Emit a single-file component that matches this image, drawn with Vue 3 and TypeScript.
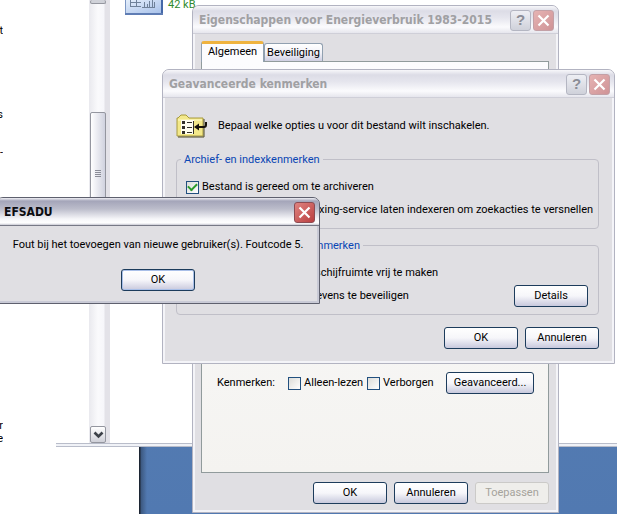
<script setup lang="ts">
import { ref } from 'vue'

interface Fragment {
  text: string
  top: number
}

const fragments: Fragment[] = [
  { text: 't', top: 24 },
  { text: 's', top: 108 },
  { text: '-', top: 146 },
  { text: 'r', top: 419 },
  { text: 'e', top: 432 },
]

const archive = ref(true)
const indexed = ref(false)
const compress = ref(false)
const encrypt = ref(true)
const readOnly = ref(false)
const hidden = ref(false)
</script>

<template>
  <main class="desktop">
    <section class="explorer">
      <div class="pane">
        <span
          v-for="f in fragments"
          :key="f.top"
          class="fragment"
          :style="{ top: f.top + 'px' }"
        >{{ f.text }}</span>
      </div>
      <div class="scrollbar">
        <div class="thumb thumb-end"></div>
        <div class="track"></div>
        <div class="thumb thumb-main">
          <i></i><i></i><i></i><i></i>
        </div>
        <button class="arrow" aria-label="Scroll">
          <svg width="11" height="8" viewBox="0 0 11 8"><path d="M1.500 1.500l4 4 4-4" fill="none" stroke="#3c4148" stroke-width="2.600" /></svg>
        </button>
      </div>
      <div class="files">
        <svg class="file-icon" width="38" height="15" viewBox="0 0 38 15">
          <defs>
            <linearGradient id="tile" x1="0" y1="0" x2="1" y2="1">
              <stop offset="0" stop-color="#e4eefb" />
              <stop offset="1" stop-color="#a9c2ea" />
            </linearGradient>
          </defs>
          <rect width="38" height="15" fill="#7d97c4" />
          <rect x="1" width="35" height="13" fill="url(#tile)" />
          <rect x="36" width="2" height="15" fill="#4568a8" />
          <rect y="13" width="38" height="2" fill="#5f7db4" />
          <path d="M5.500 0V7M5 2.500H16M5 6.500H16M11.500 0V7M17 7.500H30M19.500 7V2M22.500 7V4M24.500 7V1M27.500 7V0M29.500 7V2" fill="none" stroke="#6f8199" />
        </svg>
        <span class="size">42 kB</span>
      </div>
    </section>
    <section class="lower"></section>

    <section class="window inactive properties">
      <header class="titlebar">
        <h1>Eigenschappen voor Energieverbruik 1983-2015</h1>
        <button class="caption help" aria-label="Help">?</button>
        <button class="caption close" aria-label="Sluiten">
          <svg width="13" height="13" viewBox="0 0 13 13"><path d="M1.500 1.500l10 10M11.500 1.500l-10 10" fill="none" stroke="#fff" stroke-width="2.200" /></svg>
        </button>
      </header>
      <div class="body">
        <nav class="tabs">
          <button class="tab selected">Algemeen</button>
          <button class="tab">Beveiliging</button>
        </nav>
        <div class="sheet">
          <div class="attributes">
            <span class="caption-text">Kenmerken:</span>
            <label class="check"><input v-model="readOnly" type="checkbox">Alleen-lezen</label>
            <label class="check"><input v-model="hidden" type="checkbox">Verborgen</label>
            <button class="btn wide">Geavanceerd...</button>
          </div>
        </div>
        <footer class="actions">
          <button class="btn">OK</button>
          <button class="btn">Annuleren</button>
          <button class="btn" disabled>Toepassen</button>
        </footer>
      </div>
    </section>

    <section class="window inactive advanced">
      <header class="titlebar">
        <h1>Geavanceerde kenmerken</h1>
        <button class="caption help" aria-label="Help">?</button>
        <button class="caption close" aria-label="Sluiten">
          <svg width="13" height="13" viewBox="0 0 13 13"><path d="M1.500 1.500l10 10M11.500 1.500l-10 10" fill="none" stroke="#fff" stroke-width="2.200" /></svg>
        </button>
      </header>
      <div class="body">
        <div class="intro">
          <svg width="32" height="24" viewBox="0 0 32 24">
            <path d="M2 4L5 1H10L13 4H27V22H1V4Z" fill="#f3e88a" stroke="#a89a3c" />
            <path d="M2 6H26" stroke="#fffbc8" />
            <path d="M28 5V23H2" fill="none" stroke="#4f4a24" />
            <rect x="5" y="6" width="13" height="14" fill="#fffef0" />
            <path d="M6 7h3v3h-3zM6 12h3v3h-3zM6 17h3v3h-3z" fill="#33302a" />
            <path d="M11 8.500H16M11 13.500H16M11 18.500H16M17.500 7V20" stroke="#33302a" />
            <path d="M30 8V11Q30 13 28 13H22" fill="none" stroke="#16120c" stroke-width="2" />
            <path d="M18 13L23 9.500V16.500Z" fill="#16120c" />
          </svg>
          <p>Bepaal welke opties u voor dit bestand wilt inschakelen.</p>
        </div>
        <fieldset class="group">
          <legend>Archief- en indexkenmerken</legend>
          <label class="check"><input v-model="archive" type="checkbox">Bestand is gereed om te archiveren</label>
          <label class="check"><input v-model="indexed" type="checkbox"><span class="indent-a">Indexing-service laten indexeren om zoekacties te versnellen</span></label>
        </fieldset>
        <fieldset class="group second">
          <legend><span class="indent-b">kenmerken</span></legend>
          <label class="check"><input v-model="compress" type="checkbox"><span class="indent-c">schijfruimte vrij te maken</span></label>
          <div class="line">
            <label class="check"><input v-model="encrypt" type="checkbox"><span class="indent-d">gegevens te beveiligen</span></label>
            <button class="btn">Details</button>
          </div>
        </fieldset>
        <footer class="actions">
          <button class="btn">OK</button>
          <button class="btn">Annuleren</button>
        </footer>
      </div>
    </section>

    <section class="window message">
      <header class="titlebar">
        <h1>EFSADU</h1>
        <button class="caption close" aria-label="Sluiten">
          <svg width="13" height="13" viewBox="0 0 13 13"><path d="M1.500 1.500l10 10M11.500 1.500l-10 10" fill="none" stroke="#fff" stroke-width="2.200" /></svg>
        </button>
      </header>
      <div class="body">
        <p>Fout bij het toevoegen van nieuwe gebruiker(s). Foutcode 5.</p>
        <button class="btn default">OK</button>
      </div>
    </section>
  </main>
</template>

<style>
body {
  margin: 0;
  overflow: hidden;
}
</style>

<style scoped>
* {
  box-sizing: border-box;
}

.desktop {
  position: relative;
  display: flex;
  flex-direction: column;
  width: 100%;
  height: 100vh;
  overflow: hidden;
  background: linear-gradient(#5b80b2, #5179b1);
  color: #000;
  font: 11px/14px Tahoma, Roboto, sans-serif;
}

button,
input {
  margin: 0;
  font: inherit;
  color: inherit;
}

h1,
p {
  margin: 0;
}

/* Explorer behind the dialogs */
.explorer {
  display: flex;
  flex: none;
  height: 443px;
  background: #fff;
}

.pane {
  position: relative;
  flex: none;
  width: 89px;
}

.fragment {
  position: absolute;
  left: 0;
  width: 3px;
  overflow: hidden;
  display: flex;
  justify-content: flex-end;
}

.scrollbar {
  display: flex;
  flex-direction: column;
  flex: none;
  width: 21px;
  padding: 0 4px 0 1px;
  background: linear-gradient(90deg, #e9e9ee 0, #fafafc 9px, #f6f6fa 15px, #e3e2e8 16px, #e3e2e8 21px);
}

.thumb {
  border: 1px solid #94969f;
  border-radius: 2px;
  background: linear-gradient(90deg, #fff, #d0d2df);
}

.thumb-end {
  height: 4px;
  border-top: 0;
  background: #d0d2d9;
}

.track {
  height: 108px;
}

.thumb-main {
  display: flex;
  flex: 1;
  flex-direction: column;
  gap: 1px;
  margin-bottom: 180px;
  padding: 57px 4px 0;
}

.thumb-main i {
  height: 1px;
  background: #8b8d97;
}

.arrow {
  display: flex;
  align-items: center;
  justify-content: center;
  height: 17px;
  padding: 0;
  border: 1px solid #94969f;
  border-radius: 2px;
  background: linear-gradient(#fff, #cfd0d8);
}

.files {
  display: flex;
  gap: 5px;
  padding-left: 15px;
}

.size {
  margin-top: -2px;
  color: #2f8a2f;
}

.lower {
  flex: 1;
  background: linear-gradient(#b9bdca, #b9bdca) 56px 0 / 100% 1px no-repeat,
    linear-gradient(#f0f2f7, #f0f2f7) 56px 1px / 100% 2px no-repeat,
    linear-gradient(#b9bdca, #b9bdca) 56px 3px / 100% 1px no-repeat,
    linear-gradient(90deg, #fff 139px, #1c2533 139px, #1c2533 140px, #3c5880 141px, transparent 147px);
}

/* Windows */
.window {
  position: absolute;
  display: flex;
  flex-direction: column;
  border: 1px solid #b2b3c1;
  border-radius: 7px 7px 0 0;
  background: #e0dfe3;
  box-shadow: inset 2px 0 #f4f4f8, inset -2px 0 #f4f4f8, inset 0 -2px #f4f4f8;
}

.properties {
  left: 192px;
  top: 5px;
  width: 367px;
  height: 508px;
}

.advanced {
  left: 162px;
  top: 69px;
  width: 453px;
  height: 295px;
}

.message {
  left: -4px;
  top: 197px;
  width: 324px;
  height: 107px;
  border-color: #5e606e;
  box-shadow: inset -2px 0 #c9cad6, inset 0 -2px #c9cad6;
}

.titlebar {
  display: flex;
  flex: none;
  align-items: center;
  gap: 2px;
  height: 28px;
  padding: 1px 4px 0 6px;
  border-bottom: 1px solid #cfcfd8;
  border-radius: 6px 6px 0 0;
  background: linear-gradient(#f7f7fa 0, #dcdce6 5px, #e6e6ee 12px, #fbfbfd 21px, #e6e6ed 100%);
}

.message .titlebar {
  padding-left: 7px;
  border-bottom-color: #777986;
  background: linear-gradient(#f0f0f5 0, #a4a5b9 3px, #bcbdcb 11px, #f6f6f9 21px, #fff 25px, #c8c8d2 100%);
}

.titlebar h1 {
  flex: 1;
  color: #a0a0a3;
  font: bold 12px/16px "Trebuchet MS", "DejaVu Sans Condensed", sans-serif;
  white-space: nowrap;
}

.message h1 {
  color: #0c0c10;
}

.caption {
  display: flex;
  align-items: center;
  justify-content: center;
  width: 21px;
  height: 21px;
  padding: 0;
  border: 1px solid #b4b6c2;
  border-radius: 3px;
  background: linear-gradient(#eeeff4, #cfd1da);
}

.help {
  color: #8b8d96;
  font: bold 15px/18px "Liberation Sans", sans-serif;
}

.close {
  border-color: #c3a0a6;
  background: linear-gradient(135deg, #e6b3b3, #cf9396);
}

.message .close {
  border-color: #8d4b52;
  background: linear-gradient(135deg, #e08480, #b93e40);
}

.body {
  display: flex;
  flex: 1;
  flex-direction: column;
}

/* Buttons and checks */
.btn {
  width: 74px;
  height: 22px;
  padding: 0;
  border: 1px solid #1d3c5c;
  border-radius: 3px;
  background: linear-gradient(#fff, #f6f6fa 50%, #c8c9dd);
  text-align: center;
  white-space: nowrap;
}

.btn.wide {
  width: 89px;
}

.btn.default {
  box-shadow: inset 0 0 0 1px #a9bfe8;
}

.btn:disabled {
  border-color: #cbcac8;
  background: #efeeeb;
  color: #a5a39b;
}

.actions {
  display: flex;
  justify-content: flex-end;
  gap: 7px;
}

.check {
  display: flex;
  align-items: center;
  gap: 3px;
  white-space: nowrap;
}

.check input {
  appearance: none;
  display: grid;
  place-items: center;
  flex: none;
  width: 13px;
  height: 13px;
  border: 1px solid #22507f;
  background: linear-gradient(135deg, #dcdcd8, #fff);
}

.check input:checked::after {
  content: "";
  width: 7px;
  height: 4px;
  margin-top: -3px;
  border: solid #2c9b2c;
  border-width: 0 0 2px 2px;
  rotate: -45deg;
}

/* Properties */
.properties .body {
  padding: 7px 9px 8px 8px;
}

.tabs {
  display: flex;
  align-items: flex-end;
  height: 20px;
}

.tab {
  height: 18px;
  width: 59px;
  padding: 0;
  border: 1px solid #91a0b0;
  border-bottom: 0;
  border-radius: 3px 3px 0 0;
  background: linear-gradient(#fff, #f3f3f8 50%, #cfcfe2);
  white-space: nowrap;
}

.tab.selected {
  z-index: 1;
  width: 63px;
  height: 21px;
  margin-bottom: -1px;
  padding-bottom: 2px;
  border-top: 3px solid #efb33f;
  background: #fcfcfe;
}

.sheet {
  display: flex;
  flex: 1;
  flex-direction: column;
  justify-content: flex-end;
  padding: 0 14px 78px 15px;
  border: 1px solid #919b9c;
  background: linear-gradient(#fcfcfe, #f4f3f0);
}

.attributes {
  display: flex;
  align-items: center;
}

.caption-text {
  width: 72px;
}

.attributes .check {
  width: 80px;
}

.attributes .wide {
  margin-left: auto;
}

.properties .actions {
  padding-top: 9px;
}

/* Advanced attributes */
.advanced .body {
  padding: 15px 15px 0 13px;
}

.intro {
  display: flex;
  align-items: center;
  gap: 10px;
  height: 26px;
}

.group {
  display: flex;
  flex-direction: column;
  gap: 9px;
  min-width: 0;
  margin: 12px 0 0;
  height: 78px;
  padding: 13px 10px 0 9px;
  border: 1px solid #c0bfc8;
  border-radius: 4px;
}

.group legend {
  margin-left: -5px;
  padding: 2px 3px 0;
  color: #0a46b4;
}

.group.second {
  margin-top: 8px;
}

.indent-a {
  padding-left: 96px;
}

.indent-b {
  padding-left: 122px;
}

.indent-c {
  padding-left: 113px;
}

.indent-d {
  padding-left: 96px;
}

.line {
  display: flex;
  align-items: center;
  justify-content: space-between;
  height: 14px;
}

.advanced .actions {
  padding-top: 12px;
}

/* Message */
.message .body {
  align-items: center;
  gap: 17px;
  padding-top: 12px;
}
</style>
